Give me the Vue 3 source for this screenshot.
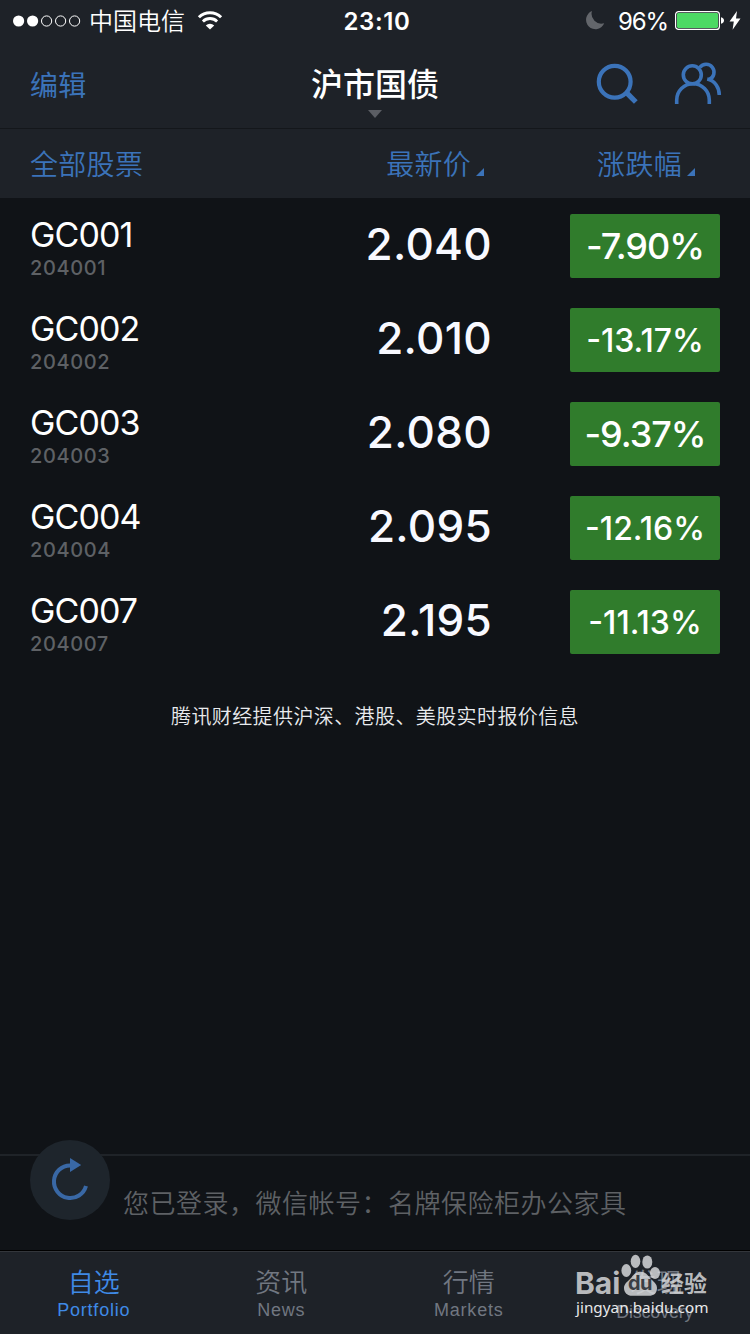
<template>
	<div class="page">
		<!-- 状态栏 -->
		<div class="status-bar">
			<div class="status-left">
				<svg class="signal" width="68" height="12" viewBox="0 0 68 12">
					<circle
						v-for="n in 5"
						:key="n"
						:cx="5.6 + (n - 1) * 14"
						cy="6"
						:r="n <= 2 ? 5.6 : 5.1"
						:fill="n <= 2 ? '#fff' : 'none'"
						:stroke="n <= 2 ? 'none' : '#fff'"
					/>
				</svg>
				<span class="carrier">中国电信</span>
				<svg class="wifi" width="26" height="20" viewBox="0 0 26 20">
					<path d="M1.9 6.2a15.8 15.8 0 0 1 22.2 0" fill="none" stroke="#fff" stroke-width="3" />
					<path d="M5.9 10.4a10.1 10.1 0 0 1 14.2 0" fill="none" stroke="#fff" stroke-width="2.8" />
					<path d="M13 18.6l-4.2-4.2a6 6 0 0 1 8.4 0z" fill="#fff" />
				</svg>
			</div>
			<span class="clock">23:10</span>
			<div class="status-right">
				<svg class="moon" width="20" height="20" viewBox="0 0 20 20">
					<path d="M7 0A9.4 9.4 0 1 0 19.2 12.2A9.8 9.8 0 0 1 7 0z" fill="#63666b" />
				</svg>
				<span class="percent">96%</span>
				<svg class="battery" width="50" height="20" viewBox="0 0 50 20">
					<rect x="0.6" y="0.6" width="43.8" height="17.8" rx="3" fill="none" stroke="#fff" stroke-width="1.2" />
					<rect x="2" y="2" width="41" height="15" rx="1.4" fill="#4cd964" />
					<path d="M46 6.2c4 1 4 5.6 0 6.6z" fill="#fff" />
				</svg>
				<svg class="bolt" width="12" height="20" viewBox="0 0 12 20">
					<path d="M8 0L0.5 10.5h4.3L3.6 18.8L11.5 7.5H7z" fill="#fff" />
				</svg>
			</div>
		</div>

		<!-- 导航栏 -->
		<div class="nav-bar">
			<span class="nav-edit">编辑</span>
			<div class="nav-title">
				<span>沪市国债</span>
				<i class="caret"></i>
			</div>
			<div class="nav-icons">
				<svg width="44" height="44" viewBox="0 0 44 44">
					<circle cx="18.7" cy="20.7" r="15.9" fill="none" stroke="#3b73b9" stroke-width="4.2" />
					<path d="M30 31.2l9.8 9.8" fill="none" stroke="#3b73b9" stroke-width="5.3" />
				</svg>
				<svg width="48" height="44" viewBox="0 0 48 44" fill="none" stroke="#3b73b9" stroke-width="3.6">
					<circle cx="18.3" cy="13.8" r="9" />
					<path d="M2.7 43v-4a16.3 16.3 0 0 1 32.6 0v4" />
					<path d="M25.8 6.5a7.9 7.9 0 1 1 9.4 12" />
					<path d="M33.2 18c8 1.7 12.1 9 12.1 16" />
				</svg>
			</div>
		</div>

		<!-- 表头 -->
		<div class="list-head">
			<span class="col-name">全部股票</span>
			<span class="col-price">最新价<i class="sort"></i></span>
			<span class="col-change">涨跌幅<i class="sort"></i></span>
		</div>

		<!-- 股票列表 -->
		<div class="list">
			<div v-for="item in stocks" :key="item.code" class="row">
				<div class="stock">
					<div class="stock-name">{{ item.name }}</div>
					<div class="stock-code">{{ item.code }}</div>
				</div>
				<div class="price">{{ item.price }}</div>
				<div class="change" :class="{ 'change-small': item.change.length > 6 }">
					{{ item.change }}
				</div>
			</div>
		</div>
		<div class="source">腾讯财经提供沪深、港股、美股实时报价信息</div>

		<!-- 登录信息 -->
		<div class="account">
			<button class="refresh">
				<svg width="80" height="80" viewBox="0 0 80 80">
					<path d="M41 25.4H40A16.3 16.3 0 1 0 56 46" fill="none" stroke="#3968a5" stroke-width="4" />
					<path d="M40 18l11.2 7L40 32z" fill="#3968a5" />
				</svg>
			</button>
			<span class="account-text">您已登录，微信帐号：名牌保险柜办公家具</span>
		</div>

		<!-- 底部标签 -->
		<div class="tab-bar">
			<div
				v-for="tab in tabs"
				:key="tab.en"
				class="tab"
				:class="{ active: tab.en === current }"
				@click="current = tab.en"
			>
				<span class="tab-cn">{{ tab.cn }}</span>
				<span class="tab-en">{{ tab.en }}</span>
			</div>
			<div class="watermark">
				<div class="mark-logo">
					<span class="mark-bai">Bai</span>
					<span class="mark-paw">
						<svg width="40" height="44" viewBox="0 0 40 44" fill="currentColor">
							<ellipse cx="5.3" cy="17.5" rx="4.9" ry="6.5" />
							<ellipse cx="14.5" cy="8.3" rx="4.8" ry="6.6" />
							<ellipse cx="26.3" cy="9" rx="5" ry="6.6" />
							<ellipse cx="34" cy="20" rx="5" ry="6" />
							<path d="M19.5 18.8c5 0 7 3.2 9.500 6.200c3.500 4 7 5.500 7 10c0 5.500-3.500 7.800-8 7.800H11c-4.500 0-8-3-8-7.800c0-4.700 4.500-6.800 7.500-10.500c2.300-3 4.500-5.700 9-5.700z" />
						</svg>
						<span class="mark-du">du</span>
					</span>
					<span class="mark-cn">经验</span>
				</div>
				<div class="mark-url">jingyan.baidu.com</div>
			</div>
		</div>
	</div>
</template>

<script setup>
import { ref } from 'vue'

const stocks = [
	{ name: 'GC001', code: '204001', price: '2.040', change: '-7.90%' },
	{ name: 'GC002', code: '204002', price: '2.010', change: '-13.17%' },
	{ name: 'GC003', code: '204003', price: '2.080', change: '-9.37%' },
	{ name: 'GC004', code: '204004', price: '2.095', change: '-12.16%' },
	{ name: 'GC007', code: '204007', price: '2.195', change: '-11.13%' },
]

const tabs = [
	{ cn: '自选', en: 'Portfolio' },
	{ cn: '资讯', en: 'News' },
	{ cn: '行情', en: 'Markets' },
	{ cn: '发现', en: 'Discovery' },
]

const current = ref('Portfolio')
</script>

<style>
body { margin: 0; background: #101317; }
</style>

<style scoped>
.page {
	width: 750px; height: 1334px; overflow: hidden;
	display: flex; flex-direction: column;
	background: #101317; color: #fff;
	font-family: Inter, "Noto Sans CJK SC", sans-serif;
}
svg { display: block; flex-shrink: 0; }

.status-bar {
	height: 40px; flex-shrink: 0; padding: 1px 9px 0 13px; box-sizing: border-box;
	display: grid; grid-template-columns: 1fr auto 1fr; align-items: center;
	background: #1e2228;
}
.status-left { display: flex; align-items: center; }
.carrier { margin-left: 8px; padding-top: 2px; font-size: 24px; line-height: 37px; font-weight: 350; }
.wifi { margin-left: 12px; }
.clock { padding-top: 1px; font-size: 24px; font-weight: 600; letter-spacing: 0.6px; }
.status-right { display: flex; align-items: center; justify-content: flex-end; }
.percent { margin-left: 13px; padding-top: 1px; font-size: 24px; letter-spacing: -1.1px; }
.battery { margin-left: 7px; }
.bolt { margin-left: 4px; }

.nav-bar {
	height: 89px; flex-shrink: 0; padding: 0 28px 0 30px; box-sizing: border-box;
	display: grid; grid-template-columns: 1fr auto 1fr; align-items: start;
	background: #1e2228; border-bottom: 1px solid #14171b;
}
.nav-edit { padding-top: 26px; font-size: 28px; line-height: 40px; color: #3b73b9; letter-spacing: 0.3px; }
.nav-title {
	display: flex; flex-direction: column; align-items: center;
	margin-left: -2px; padding-top: 21px; font-size: 32px; line-height: 48px; font-weight: 500;
}
.caret {
	width: 0; height: 0; margin-top: 1px;
	border: 7px solid transparent; border-top: 8px solid #5b5e64; border-bottom: 0;
}
.nav-icons { display: flex; justify-content: flex-end; gap: 34px; padding-top: 21px; }

.list-head {
	height: 69px; flex-shrink: 0; padding: 0 30px 1px; box-sizing: border-box;
	display: flex; align-items: center;
	background: #1e2228; color: #3b73b9;
	font-size: 28px; font-weight: 350; letter-spacing: 0.3px;
}
.col-name { flex: 1; }
.col-price { display: flex; align-items: flex-end; margin-right: 113px; }
.col-change { display: flex; align-items: flex-end; margin-right: 25px; }
.sort {
	width: 0; height: 0; margin: 0 0 7px 5px;
	border-left: 8px solid transparent; border-bottom: 8px solid #3b73b9;
}

.row { display: flex; height: 94px; padding: 16px 30px 14px; box-sizing: border-box; }
.stock { flex: 1; }
.stock-name { font-size: 34px; line-height: 42px; font-weight: 400; letter-spacing: -0.9px; }
.stock-code { font-size: 20px; line-height: 24px; font-weight: 500; letter-spacing: 0.6px; color: #5e6165; }
.price {
	margin-right: 78px; font-size: 44px; line-height: 61px; font-weight: 550;
	letter-spacing: 0.3px; color: #f8f9ff;
}
.change {
	width: 150px; height: 64px; border-radius: 2px; background: #307c2c;
	font-size: 36px; line-height: 65px; font-weight: 550; letter-spacing: -1px; text-align: center;
}
.change-small { font-size: 32px; letter-spacing: 0; }
.source {
	margin-top: 34px; text-align: center; font-size: 20px; line-height: 30px;
	font-weight: 350; letter-spacing: 0.4px; color: #e9ebee;
}

.account {
	position: relative; height: 91px; margin-top: auto; flex-shrink: 0;
	padding: 0 0 3px 123px; border-top: 2px solid #1f2328;
	display: flex; align-items: center;
}
.refresh {
	position: absolute; left: 30px; top: -16px; width: 80px; height: 80px;
	padding: 0; border: 0; border-radius: 50%; background: #1e252c; cursor: pointer;
}
.account-text { font-size: 26px; font-weight: 350; letter-spacing: 0.5px; color: #5e6165; }

.tab-bar {
	position: relative; height: 84px; flex-shrink: 0; box-sizing: border-box;
	display: flex; background: #1e2228;
	border-top: 1px solid #000; box-shadow: inset 0 1px #33363b;
}
.tab {
	flex: 1; display: flex; flex-direction: column; align-items: center;
	padding-top: 15px; color: #717781; cursor: pointer;
}
.tab-cn { font-size: 26px; line-height: 34px; font-weight: 350; }
.tab-en { font-family: "Liberation Sans", sans-serif; font-size: 18px; line-height: 21px; letter-spacing: 0.8px; }
.tab:nth-child(4) .tab-en { margin-left: -3px; padding-top: 2px; letter-spacing: -0.2px; }
.active { color: #3f8ae6; }

.watermark { position: absolute; left: 575px; top: 2px; color: rgba(220, 221, 223, 0.82); }
.mark-logo { display: flex; height: 44px; align-items: flex-end; }
.mark-bai { width: 46px; font-size: 30px; line-height: 27px; font-weight: 700; }
.mark-paw { position: relative; }
.mark-du {
	position: absolute; left: 7px; top: 20px; font-size: 20px; line-height: 21px;
	font-weight: 700; letter-spacing: -0.5px; color: #3a3e44;
}
.mark-cn { font-size: 23px; line-height: 25px; font-weight: 700; }
.mark-url { padding-left: 1px; font-family: "Noto Sans", sans-serif; font-size: 15.3px; line-height: 21px; color: #e8e9ea; }
</style>
